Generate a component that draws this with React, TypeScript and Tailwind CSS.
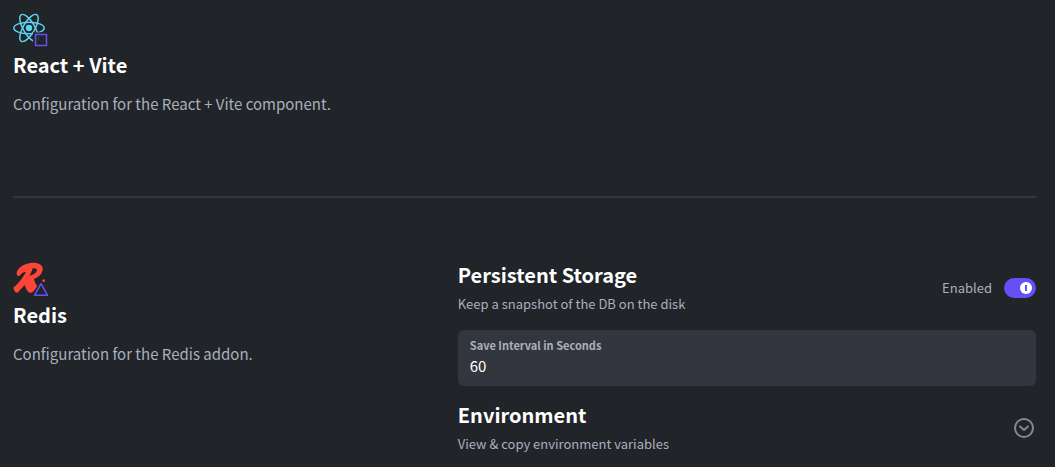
import { useState, type ReactNode } from "react";

function ReactViteIcon() {
  return (
    <svg className="size-9" viewBox="39 36 108 108" fill="none" aria-hidden="true">
      <g stroke="#5ed3f3" strokeWidth="4.5">
        <ellipse cx="87" cy="84" rx="45.500" ry="17.5" />
        <ellipse cx="87" cy="84" rx="46" ry="17.5" transform="rotate(60 87 84)" />
        <ellipse cx="87" cy="84" rx="46" ry="17.5" transform="rotate(120 87 84)" />
      </g>
      <circle cx="87" cy="84" r="9.5" fill="#5ed3f3" />
      <path d="M99 97h45v45H99z" fill="#212428" />
      <path d="M115 112v9" stroke="#2c5666" strokeWidth="3" />
      <path d="M106.500 103.500h33v33h-33z" stroke="#6550f5" strokeWidth="4.500" strokeLinejoin="round" />
    </svg>
  );
}

function RedisIcon() {
  return (
    <svg className="size-9" viewBox="39 36 108 108" fill="none" aria-hidden="true">
      <path
        d="M51 75C45 62 64 43 91 39C113 36 129 44 128 58C127 72 116 82 102 87C104 96 107 104 112 108L103 121C99 127 94 130 89 128C81 125 77 113 74 105C67 113 59 122 51 129C46 127 41 121 40 113C54 102 68 85 78 66C70 66 65 70 61 75C58 79 53 79 51 75Z"
        fill="#ff4438"
      />
      <path d="M98 55C107 53 113 57 110 64C107 71 98 75 88 77C93 70 96 62 98 55Z" fill="#212428" />
      <circle cx="131" cy="92" r="4" fill="#ff4438" />
      <path d="M123 95L148 139H98Z" fill="#212428" />
      <path d="M123 101L142.500 136H103.500Z" stroke="#6550f5" strokeWidth="4.500" strokeLinejoin="round" />
    </svg>
  );
}

function ComponentSection({
  icon,
  title,
  description,
  children,
}: {
  icon: ReactNode;
  title: string;
  description: string;
  children?: ReactNode;
}) {
  return (
    <section className="grid grid-cols-[10fr_13fr]">
      <div>
        {icon}
        <h2 className="mt-1 text-xl leading-[26px] font-bold text-white">{title}</h2>
        <p className="mt-3.5 text-[15px] leading-6 text-[#a9b0bd]">{description}</p>
      </div>
      <div className="min-w-0">{children}</div>
    </section>
  );
}

function SettingHeading({ title, description }: { title: string; description: string }) {
  return (
    <div>
      <h3 className="text-xl leading-[26px] font-bold text-white">{title}</h3>
      <p className="mt-1.5 text-[13px] leading-5 text-[#a9b0bd]">{description}</p>
    </div>
  );
}

export default function App() {
  const [enabled, setEnabled] = useState(true);
  const [interval, setInterval] = useState("60");
  const [open, setOpen] = useState(false);

  return (
    <main className="min-h-screen bg-[#212428] pt-3 pr-[19px] pb-3 pl-[13px] font-['Noto_Sans_CJK_SC',sans-serif]">
      <ComponentSection
        icon={<ReactViteIcon />}
        title="React + Vite"
        description="Configuration for the React + Vite component."
      />
      <hr className="mt-20 mb-16 border-t-2 border-[#33363f]" />
      <ComponentSection icon={<RedisIcon />} title="Redis" description="Configuration for the Redis addon.">
        <div className="flex items-center justify-between">
          <SettingHeading title="Persistent Storage" description="Keep a snapshot of the DB on the disk" />
          <label className="flex cursor-pointer items-center gap-3 text-[13px] leading-5 text-[#a9b0bd]">
            Enabled
            <span className="grid h-5 w-8 items-center">
              <input
                type="checkbox"
                checked={enabled}
                onChange={(e) => setEnabled(e.target.checked)}
                className="peer col-start-1 row-start-1 h-5 w-8 cursor-pointer appearance-none rounded-full bg-[#4a4e59] checked:bg-[#6550f5]"
              />
              <span className="pointer-events-none col-start-1 row-start-1 mx-1 flex size-3 items-center justify-center rounded-full bg-white peer-checked:justify-self-end">
                <span className="h-1.5 w-0.5 bg-[#6550f5]" />
              </span>
            </span>
          </label>
        </div>
        <div className="mt-4 flex flex-col rounded-md bg-[#33363f] px-3 pt-1.5 pb-2">
          <label htmlFor="save-interval" className="text-[11px] leading-[18px] font-bold text-[#a9b0bd]">
            Save Interval in Seconds
          </label>
          <input
            id="save-interval"
            inputMode="numeric"
            value={interval}
            onChange={(e) => setInterval(e.target.value)}
            className="h-6 w-full bg-transparent text-[15px] leading-6 text-white outline-none"
          />
        </div>
        <div className="mt-4 flex items-center justify-between">
          <SettingHeading title="Environment" description="View & copy environment variables" />
          <button
            type="button"
            aria-label="Toggle environment variables"
            aria-expanded={open}
            onClick={() => setOpen(!open)}
            className="cursor-pointer text-[#858891]"
          >
            <svg className="size-6" viewBox="0 0 24 24" fill="none" stroke="currentColor" strokeWidth="2">
              <circle cx="12" cy="12" r="9" />
              <path d="M8 10.500l4 3.500 4-3.500" strokeLinecap="round" strokeLinejoin="round" />
            </svg>
          </button>
        </div>
      </ComponentSection>
    </main>
  );
}
